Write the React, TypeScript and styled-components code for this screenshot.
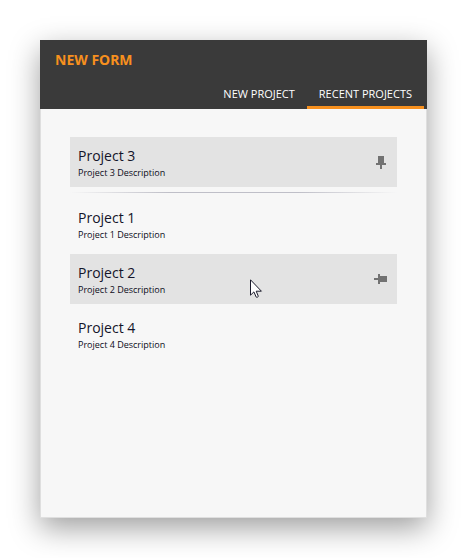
import React, { useState } from "react";
import styled, { createGlobalStyle } from "styled-components";

const GlobalStyle = createGlobalStyle`
  * { box-sizing: border-box; }
  body {
    margin: 0;
    background: #ffffff;
    font-family: "Open Sans", "Noto Sans", sans-serif;
  }
`;

const Page = styled.div`
  display: flex;
  min-height: 100vh;
  padding: 40px;
`;

const FormWindow = styled.main`
  display: flex;
  flex-direction: column;
  flex: 1;
  background: #f7f7f7;
  box-shadow: 0 10px 28px rgba(0, 0, 0, 0.38);
`;

const Header = styled.header`
  display: flex;
  flex-direction: column;
  justify-content: space-between;
  height: 69px;
  padding: 10px 3px 0 15px;
  background: #3a3a3a;
`;

const Title = styled.h1`
  margin: 0;
  color: #f7901e;
  font-family: "Noto Sans", "Open Sans", sans-serif;
  font-size: 14px;
  font-weight: 700;
  line-height: 20px;
`;

const Tabs = styled.nav`
  display: flex;
  justify-content: flex-end;
`;

const Tab = styled.button<{ $active: boolean }>`
  height: 30px;
  padding: 3px 12px 0;
  border: 0;
  border-bottom: 3px solid ${(p) => (p.$active ? "#f7901e" : "transparent")};
  background: transparent;
  color: #ffffff;
  font-family: inherit;
  font-size: 11px;
  line-height: 24px;
  white-space: nowrap;
`;

const Content = styled.section`
  flex: 1;
  padding: 28px 29px;
  border: 1px solid #dfdfdf;
  border-top: 0;
`;

const ProjectList = styled.ul`
  display: flex;
  flex-direction: column;
  gap: 5px;
  margin: 0;
  padding: 0;
  list-style: none;
`;

const Row = styled.li<{ $highlighted: boolean }>`
  position: relative;
  display: flex;
  align-items: center;
  justify-content: space-between;
  height: 50px;
  padding: 0 8px;
  background: ${(p) => (p.$highlighted ? "#e3e3e3" : "transparent")};
`;

const ProjectText = styled.div`
  padding-top: 2px;
`;

const ProjectName = styled.h2`
  margin: 0;
  color: #14142a;
  font-size: 14px;
  font-weight: 400;
  line-height: 20px;
`;

const Description = styled.p`
  margin: 0;
  color: #0c0c20;
  font-size: 9px;
  line-height: 14px;
`;

const PinButton = styled.button`
  display: flex;
  padding: 0;
  border: 0;
  background: transparent;
`;

const Divider = styled.hr`
  width: 100%;
  height: 1px;
  margin: 5px 0 6px;
  border: 0;
  background: linear-gradient(to right, transparent, #bfbfc8 30%, #bfbfc8 70%, transparent);
`;

const Pointer = styled.svg`
  position: absolute;
  top: 25px;
  left: 55%;
  pointer-events: none;
`;

type Project = { name: string; pin?: "pinned" | "unpinned"; pointer?: boolean };

const pinned: Project[] = [{ name: "Project 3", pin: "pinned" }];
const others: Project[] = [
  { name: "Project 1" },
  { name: "Project 2", pin: "unpinned", pointer: true },
  { name: "Project 4" },
];
const tabs = ["NEW PROJECT", "RECENT PROJECTS"];

function PinIcon({ upright }: { upright: boolean }) {
  return (
    <svg width="16" height="16" viewBox="0 0 16 16" fill="#727272" shapeRendering="crispEdges" aria-hidden="true">
      <path d={upright ? "M5 2h6v7h2v2H9v4H7v-4H3V9h2z" : "M1 7h4V3h2v2h7v6H7v2H5V9H1z"} />
    </svg>
  );
}

function ProjectRow({ project }: { project: Project }) {
  return (
    <Row $highlighted={Boolean(project.pin)}>
      <ProjectText>
        <ProjectName>{project.name}</ProjectName>
        <Description>{project.name} Description</Description>
      </ProjectText>
      {project.pin && (
        <PinButton aria-label={project.pin === "pinned" ? "Unpin project" : "Pin project"}>
          <PinIcon upright={project.pin === "pinned"} />
        </PinButton>
      )}
      {project.pointer && (
        <Pointer width="13" height="20" viewBox="0 0 13 20" aria-hidden="true">
          <path
            d="M.5.8v15.4l3.4-3.3 2.3 5.2c.3.6 2.4-.2 2.1-.9L6.2 12.2h5.2z"
            fill="#ffffff"
            stroke="#1b1b2c"
          />
        </Pointer>
      )}
    </Row>
  );
}

export default function App() {
  const [active, setActive] = useState("RECENT PROJECTS");
  return (
    <Page>
      <GlobalStyle />
      <FormWindow>
        <Header>
          <Title>NEW FORM</Title>
          <Tabs>
            {tabs.map((tab) => (
              <Tab key={tab} $active={tab === active} onClick={() => setActive(tab)}>
                {tab}
              </Tab>
            ))}
          </Tabs>
        </Header>
        <Content>
          <ProjectList>
            {pinned.map((p) => (
              <ProjectRow key={p.name} project={p} />
            ))}
          </ProjectList>
          <Divider />
          <ProjectList>
            {others.map((p) => (
              <ProjectRow key={p.name} project={p} />
            ))}
          </ProjectList>
        </Content>
      </FormWindow>
    </Page>
  );
}
